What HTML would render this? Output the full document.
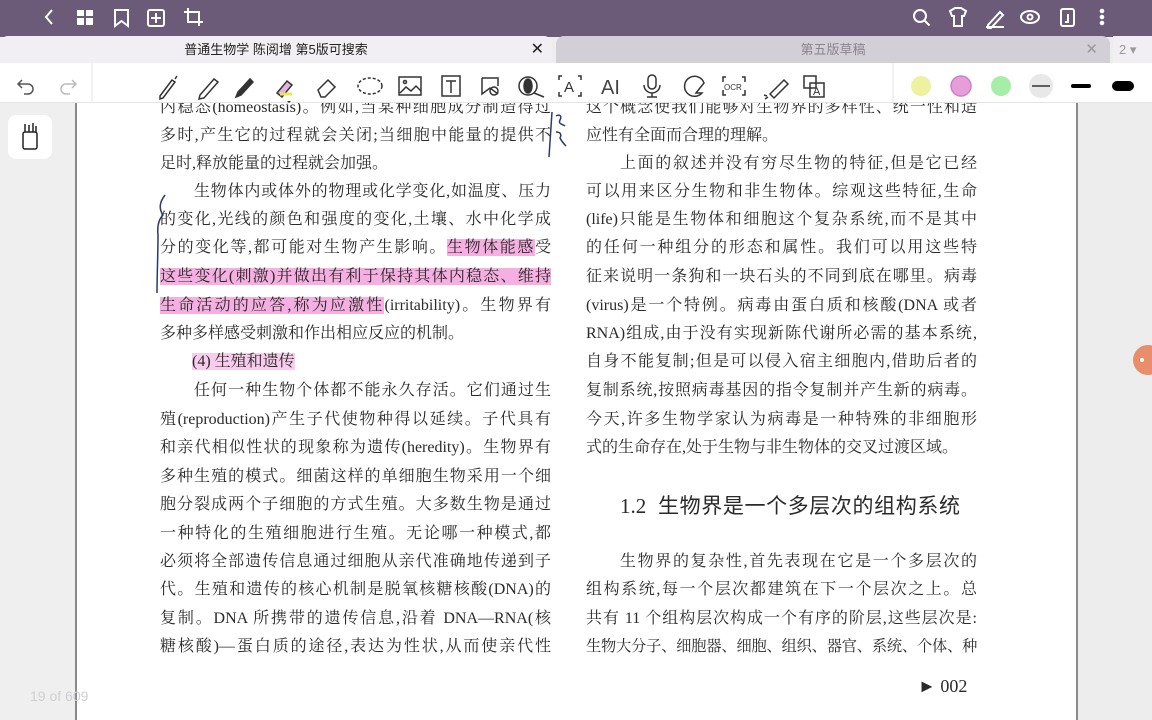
<!DOCTYPE html>
<html><head><meta charset="utf-8"><style>
*{margin:0;padding:0;box-sizing:border-box}
body{width:1152px;height:720px;overflow:hidden;position:relative;background:#ededee;font-family:"Liberation Serif","Noto Serif CJK SC",serif}
.top{position:absolute;left:0;top:0;width:1152px;height:37px;background:#6b5b79}
.tab1{position:absolute;left:0;top:36px;width:552px;height:27px;background:#f1eff3;border-radius:8px 8px 0 0;font:13px "Liberation Sans","Noto Sans CJK SC",sans-serif;color:#222;text-align:center;line-height:27px}
.tab2{position:absolute;left:556px;top:36px;width:554px;height:27px;background:#d3cfd7;border-radius:8px 8px 0 0;font:13px "Liberation Sans","Noto Sans CJK SC",sans-serif;color:#8a8590;text-align:center;line-height:27px}
.tool{position:absolute;left:0;top:63px;width:1152px;height:40px;background:#fff;border-bottom:1px solid #e4e4e4}
.side{position:absolute;left:0;top:103px;width:75px;height:617px;background:#efeff0}
.page{position:absolute;left:75px;top:103px;width:1003px;height:617px;background:#fff;border-left:2px solid #8a8a8a;border-right:2px solid #8a8a8a}
.l{position:absolute;height:28px;line-height:28px;font-size:16px;color:#2a2a2a;white-space:nowrap;text-align:justify;text-align-last:justify;width:391px}
.L{left:160px}.R{left:586px}
.hl{background:rgba(236,110,200,.55)}
svg{position:absolute}
</style></head><body>
<div class="top"></div>
<svg style="left:0;top:0" width="1152" height="36" fill="none" stroke="#fff" stroke-width="2">
<path d="M52 10l-6 7 6 7"/>
<rect x="77" y="10" width="7" height="6" fill="#fff" stroke="none"/><rect x="86" y="10" width="7" height="6" fill="#fff" stroke="none"/><rect x="77" y="18" width="7" height="7" fill="#fff" stroke="none"/><rect x="86" y="18" width="7" height="7" fill="#fff" stroke="none"/>
<path d="M115 10h13v16l-6.5-5-6.5 5z"/>
<rect x="148" y="10" width="16" height="16" rx="2"/><path d="M156 13v10M151 18h10"/>
<path d="M188 8v14h15M184 12h15v14"/>
<circle cx="920" cy="16" r="6"/><path d="M924.5 20.5l5 5"/>
<path d="M950 11l5-3h6l5 3-2 5h-2v10h-8v-10h-2z"/>
<path d="M988 25l12-13 3 3-12 13h-3zM986 27h18"/>
<ellipse cx="1030" cy="17" rx="9" ry="6"/><circle cx="1030" cy="17" r="2.5"/>
<rect x="1061" y="9" width="13" height="17" rx="2"/><path d="M1068 14v8h-3"/>
<circle cx="1102" cy="11" r="1.3" fill="#fff"/><circle cx="1102" cy="17" r="1.3" fill="#fff"/><circle cx="1102" cy="23" r="1.3" fill="#fff"/>
</svg>
<div class="tab1">普通生物学 陈阅增 第5版可搜索<span style="position:absolute;right:8px;font-size:16px">✕</span></div>
<div class="tab2">第五版草稿<span style="position:absolute;right:12px;font-size:15px;color:#999">✕</span></div>
<div style="position:absolute;left:1113px;top:36px;width:39px;height:27px;background:#f1eff3;font:13px 'Liberation Sans',sans-serif;color:#999;line-height:27px;padding-left:6px">2 ▾</div>
<div class="tool"></div>
<svg style="left:0;top:63px" width="1152" height="42" fill="none" stroke="#333" stroke-width="1.5">
<path d="M22 17l-4 4 4 4M18 21h10a5 5 0 0 1 0 10h-4" stroke="#555"/>
<path d="M72 17l4 4-4 4M76 21h-10a5 5 0 0 0 0 10h4" stroke="#bbb"/>
<line x1="92" y1="0" x2="92" y2="40" stroke="#eee"/>
<path d="M160 33l12-16 3 2-12 16-3 1zM175 16l2-3"/>
<path d="M200 32l14-16 4 3-14 16-5 1z"/>
<path d="M236 34l2-5 12-13 3 3-12 13z" fill="#333"/>
<path d="M277 30l10-12 5 4-10 12z" fill="#e6b3e0"/><path d="M280 31h12" stroke="#e6e850" stroke-width="3"/><path d="M287 38l2 2 2-2z" fill="#333" stroke="none"/>
<path d="M318 27l10-10 7 7-10 10h-4z"/>
<ellipse cx="370" cy="23" rx="12" ry="8" stroke-dasharray="3 2"/>
<rect x="399" y="14" width="22" height="18"/><path d="M400 30l6-6 5 4 5-5 5 5"/><circle cx="405" cy="19" r="1.5"/>
<rect x="442" y="13" width="18" height="20"/><path d="M446 18h10M451 18v12"/>
<path d="M482 15h16v8M482 15v16l8-6 8 6"/><circle cx="494" cy="28" r="4"/>
<circle cx="528" cy="23" r="9"/><ellipse cx="528" cy="23" rx="4" ry="7" fill="#333"/><path d="M534 30l10 4"/>
<path d="M562 13h-3v4M578 13h3v4M562 33h-3v-4M578 33h3v-4"/><text x="564" y="29" font-family="Liberation Sans" font-size="15" fill="#333" stroke="none">A</text>
<text x="601" y="31" font-family="Liberation Sans" font-size="20" fill="#444" stroke="none">AI</text>
<rect x="648" y="12" width="8" height="14" rx="4"/><path d="M644 22a8 8 0 0 0 16 0M652 30v4M647 34h10"/>
<path d="M702 30a10 10 0 1 1 2-10l-8 10z"/>
<path d="M726 14h-3v5M742 14h3v5M726 32h-3v-5M742 32h3v-5"/><text x="724" y="27" font-family="Liberation Sans" font-size="8" fill="#333" stroke="none">OCR</text>
<path d="M770 31l14-14 4 4-14 14zM765 36l3-2M764 32l3 1"/>
<rect x="804" y="13" width="12" height="12"/><rect x="810" y="20" width="14" height="14"/><text x="813" y="32" font-family="Liberation Sans" font-size="11" fill="#333" stroke="none">A</text>
<line x1="893" y1="0" x2="893" y2="40" stroke="#eee"/>
<circle cx="921" cy="23" r="10" fill="#eef2a0" stroke="none"/>
<circle cx="961" cy="23" r="10" fill="#e59ed8" stroke="#d080c8"/>
<circle cx="1001" cy="23" r="10" fill="#a6eea8" stroke="none"/>
<circle cx="1041" cy="23" r="12" fill="#e8e8e8" stroke="none"/><path d="M1032 23h18"/>
<path d="M1073 23h16" stroke="#000" stroke-width="4" stroke-linecap="round"/>
<path d="M1117 23h12" stroke="#000" stroke-width="10" stroke-linecap="round"/>
</svg>
<div class="side"></div>
<div style="position:absolute;left:8px;top:115px;width:44px;height:44px;background:#fff;border-radius:8px"></div>
<svg style="left:20px;top:122px" width="22" height="30" fill="none" stroke="#222" stroke-width="1.5"><rect x="3" y="10" width="14" height="17" rx="2"/><path d="M5 10V2M9 10V3M13 10V1M16 10V4" /></svg>
<div class="page"></div>
<div style="position:absolute;left:0;top:103px;width:1152px;height:617px;overflow:hidden">
<div style="position:absolute;left:0;top:-103px">
<div class="l L" style="top:94px">内稳态(homeostasis)。例如,当某种细胞成分制造得过</div>
<div class="l L" style="top:122px">多时,产生它的过程就会关闭;当细胞中能量的提供不</div>
<div class="l L" style="top:150px;text-align-last:left;width:auto">足时,释放能量的过程就会加强。</div>
<div class="l L" style="top:178px;left:194px;width:357px">生物体内或体外的物理或化学变化,如温度、压力</div>
<div class="l L" style="top:206px">的变化,光线的颜色和强度的变化,土壤、水中化学成</div>
<div class="l L" style="top:234px">分的变化等,都可能对生物产生影响。<span class="hl">生物体能感</span>受</div>
<div class="l L" style="top:263px"><span class="hl">这些变化(刺激)并做出有利于保持其体内稳态、维持</span></div>
<div class="l L" style="top:292px"><span class="hl">生命活动的应答,称为应激性</span>(irritability)。生物界有</div>
<div class="l L" style="top:320px;text-align-last:left;width:auto">多种多样感受刺激和作出相应反应的机制。</div>
<div class="l L" style="top:348px;left:192px;text-align-last:left;width:auto"><span class="hl" style="background:rgba(236,110,200,.35)">(4) 生殖和遗传</span></div>
<div class="l L" style="top:377px;left:194px;width:357px">任何一种生物个体都不能永久存活。它们通过生</div>
<div class="l L" style="top:406px">殖(reproduction)产生子代使物种得以延续。子代具有</div>
<div class="l L" style="top:434px">和亲代相似性状的现象称为遗传(heredity)。生物界有</div>
<div class="l L" style="top:463px">多种生殖的模式。细菌这样的单细胞生物采用一个细</div>
<div class="l L" style="top:491px">胞分裂成两个子细胞的方式生殖。大多数生物是通过</div>
<div class="l L" style="top:520px">一种特化的生殖细胞进行生殖。无论哪一种模式,都</div>
<div class="l L" style="top:548px">必须将全部遗传信息通过细胞从亲代准确地传递到子</div>
<div class="l L" style="top:576px">代。生殖和遗传的核心机制是脱氧核糖核酸(DNA)的</div>
<div class="l L" style="top:605px">复制。DNA 所携带的遗传信息,沿着 DNA—RNA(核</div>
<div class="l L" style="top:633px">糖核酸)—蛋白质的途径,表达为性状,从而使亲代性</div>

<div class="l R" style="top:94px">这个概念使我们能够对生物界的多样性、统一性和适</div>
<div class="l R" style="top:122px;text-align-last:left;width:auto">应性有全面而合理的理解。</div>
<div class="l R" style="top:150px;left:620px;width:357px">上面的叙述并没有穷尽生物的特征,但是它已经</div>
<div class="l R" style="top:178px">可以用来区分生物和非生物体。综观这些特征,生命</div>
<div class="l R" style="top:206px">(life)只能是生物体和细胞这个复杂系统,而不是其中</div>
<div class="l R" style="top:234px">的任何一种组分的形态和属性。我们可以用这些特</div>
<div class="l R" style="top:263px">征来说明一条狗和一块石头的不同到底在哪里。病毒</div>
<div class="l R" style="top:292px">(virus)是一个特例。病毒由蛋白质和核酸(DNA 或者</div>
<div class="l R" style="top:320px">RNA)组成,由于没有实现新陈代谢所必需的基本系统,</div>
<div class="l R" style="top:348px">自身不能复制;但是可以侵入宿主细胞内,借助后者的</div>
<div class="l R" style="top:377px">复制系统,按照病毒基因的指令复制并产生新的病毒。</div>
<div class="l R" style="top:406px">今天,许多生物学家认为病毒是一种特殊的非细胞形</div>
<div class="l R" style="top:434px;text-align-last:left;width:auto">式的生命存在,处于生物与非生物体的交叉过渡区域。</div>
<div class="l R" style="top:492px;left:620px;font-size:21px;font-family:'Liberation Serif','Noto Sans CJK SC',sans-serif;width:340px;text-align-last:justify">1.2&nbsp;&nbsp;生物界是一个多层次的组构系统</div>
<div class="l R" style="top:548px;left:620px;width:357px">生物界的复杂性,首先表现在它是一个多层次的</div>
<div class="l R" style="top:576px">组构系统,每一个层次都建筑在下一个层次之上。总</div>
<div class="l R" style="top:605px">共有 11 个组构层次构成一个有序的阶层,这些层次是:</div>
<div class="l R" style="top:633px;font-size:15.2px;letter-spacing:-0.3px">生物大分子、细胞器、细胞、组织、器官、系统、个体、种</div>
<div class="l" style="top:672px;left:918px;width:auto;font-size:18px">► 002</div>
<svg style="left:0;top:0" width="1152" height="720" fill="none" stroke="#2a3a6a" stroke-width="1.5">
<path d="M165 195c-6 8-6 14-2 20-4 4-6 10-5 20 0 20-1 40-1 58"/>
<path d="M552 112c-1 15-2 30-3 45M556 116c4-2 6 0 4 4-2 4 2 4 5 6M556 132c4 0 6 2 4 6 2 4 4 6 6 8"/>
</svg>
<div style="position:absolute;left:1133px;top:345px;width:30px;height:30px;border-radius:50%;background:#e98d6a"></div>
<div style="position:absolute;left:1140px;top:358px;width:4px;height:4px;border-radius:50%;background:#fff"></div>
<div style="position:absolute;left:30px;top:688px;font:14px 'Liberation Sans',sans-serif;color:#d0d0d4;white-space:nowrap">19 of 609</div>
</div></div>
</body></html>
